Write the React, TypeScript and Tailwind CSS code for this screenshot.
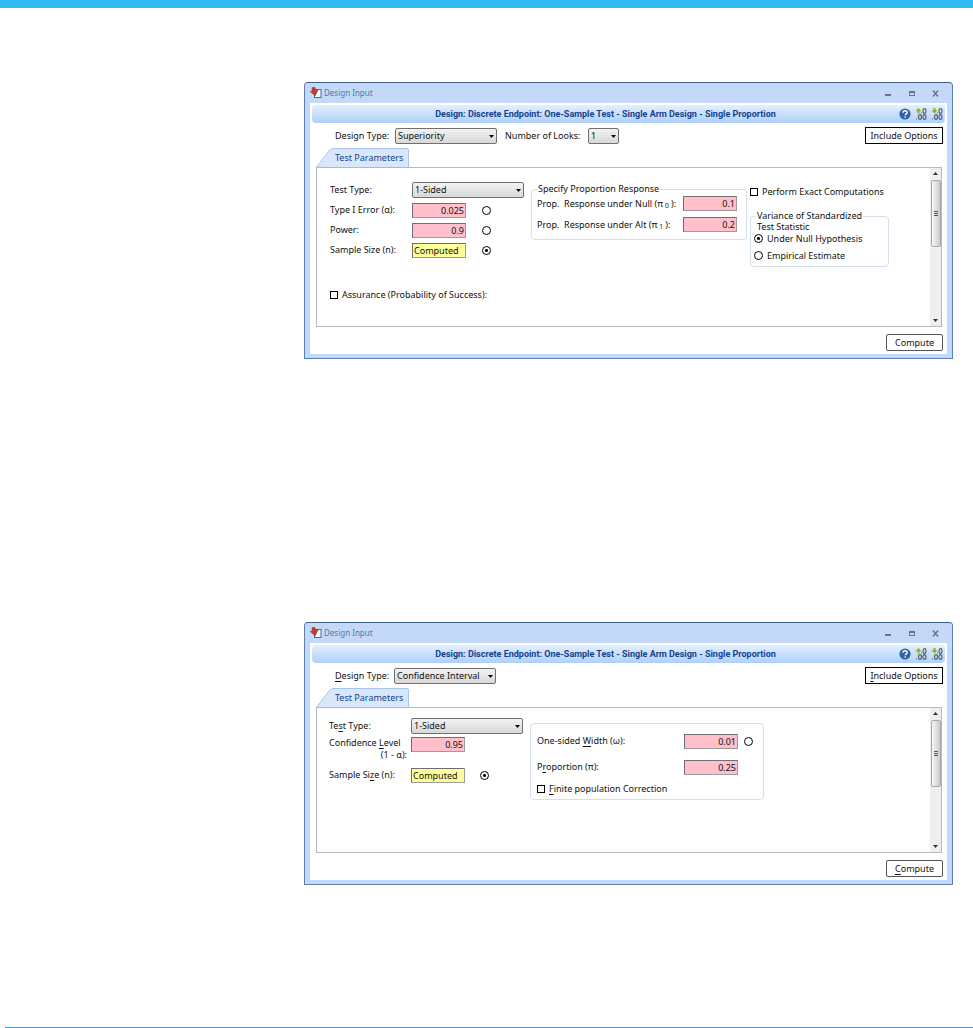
import type { ReactNode, InputHTMLAttributes } from "react";

const Access = ({ children }: { children: ReactNode }) => (
  <span className="underline underline-offset-2">{children}</span>
);

const AppIcon = () => (
  <svg className="h-[12px] w-[12px]" viewBox="0 0 12 12" aria-hidden="true">
    <rect x="4.5" y="2.5" width="6.500" height="8" fill="#fff" stroke="#3f68a8" />
    <path
      d="M2 .6 5 .4 5.400 3.200 8 3 5.200 8.800.2 4.600 2.200 4.200z"
      fill="#c8372a"
      stroke="#97291f"
      strokeWidth="0.5"
    />
  </svg>
);

const HelpIcon = () => (
  <svg className="h-[12px] w-[12px]" viewBox="0 0 12 12" aria-hidden="true">
    <circle cx="6" cy="6" r="5.6" fill="#2f63a4" />
    <path d="M3.9 4.8C3.9 3.4 4.8 2.7 6 2.7s2.2.7 2.2 1.8c0 1.3-1.9 1.4-1.9 2.8" fill="none" stroke="#fff" strokeWidth="1.4" />
    <circle cx="6.2" cy="9.1" r="0.8" fill="#fff" />
  </svg>
);

const DecimalIcon = ({ down }: { down?: boolean }) => (
  <svg className="h-[12px] w-[12px]" viewBox="0 0 12 12" aria-hidden="true">
    <path d={down ? "M2.500 0h2v2.200H6.500L3.500 5.500.5 2.200h2z" : "M3.500 0 6.500 3.200H4.500v2.200h-2V3.200H.5z"} fill="#8fae2b" />
    <g fill="none" stroke="#5c6670" strokeWidth="1.200">
      <ellipse cx="9.500" cy="3" rx="1.500" ry="2.300" />
      <ellipse cx="5" cy="9" rx="1.500" ry="2.300" />
      <ellipse cx="9.500" cy="9" rx="1.500" ry="2.300" />
    </g>
    <path d="M1 10.500h1v1H1zM6 4.500h1v1H6z" fill="#5c6670" />
  </svg>
);

type PickProps = { id: string; value: string; className?: string };

const Pick = ({ id, value, className = "" }: PickProps) => (
  <span className={`relative flex h-4 items-center ${className}`}>
    <select
      id={id}
      className="h-full w-full appearance-none rounded-xs border border-[#707070] bg-linear-to-b from-[#f3f3f3] to-[#d8d8d8] pl-[2px] leading-[14px]"
    >
      <option>{value}</option>
    </select>
    <svg className="pointer-events-none absolute right-[3px] h-[3px] w-[5px]" viewBox="0 0 5 3" aria-hidden="true">
      <path d="M0 0h5L2.500 3z" fill="#000" />
    </svg>
  </span>
);

const Field = ({ id, value, computed }: { id: string; value: string; computed?: boolean }) => (
  <input
    id={id}
    defaultValue={value}
    readOnly={computed}
    className={`h-[15px] w-[54px] border border-[#a09a9a] border-t-[#6e6e6e] border-l-[#6e6e6e] px-[1px] leading-none ${
      computed ? "bg-[#ffff99] text-left" : "bg-[#ffc0cb] text-right"
    }`}
  />
);

const Radio = (props: InputHTMLAttributes<HTMLInputElement>) => (
  <input
    type="radio"
    {...props}
    className="h-[9px] w-[9px] shrink-0 appearance-none rounded-full border border-black bg-white checked:bg-[radial-gradient(circle,#000_1px,#fff_2px)]"
  />
);

const Check = ({ id }: { id: string }) => (
  <input id={id} type="checkbox" className="h-2 w-2 shrink-0 appearance-none border border-black bg-white" />
);

const ScrollBar = () => (
  <div className="flex w-[11px] shrink-0 flex-col items-center bg-[#efefef] py-1" aria-hidden="true">
    <svg className="h-[3px] w-[5px]" viewBox="0 0 5 3"><path d="M2.500 0 5 3H0z" fill="#333" /></svg>
    <div className="mt-[5px] flex h-[67px] w-[10px] flex-col items-center justify-center gap-px rounded-xs border border-[#a8a8a8] bg-linear-to-r from-[#f6f6f6] to-[#c9cbd0]">
      <i className="h-px w-1 bg-[#555]" />
      <i className="h-px w-1 bg-[#555]" />
      <i className="h-px w-1 bg-[#555]" />
    </div>
    <svg className="mt-auto h-[3px] w-[5px]" viewBox="0 0 5 3"><path d="M0 0h5L2.500 3z" fill="#333" /></svg>
  </div>
);

type WindowProps = { toolbar: ReactNode; include: ReactNode; compute: ReactNode; children: ReactNode };

const DesignWindow = ({ toolbar, include, compute, children }: WindowProps) => (
  <section className="rounded-t-sm border border-[#5f7fae] border-t-[#3d5f86] bg-[#bfd9ff] px-[5px] pb-1">
    <header className="-mx-[5px] flex h-5 items-center rounded-t-sm bg-[#c3d9f7] pr-[13px] pl-[5px] text-[#4d7ab5]">
      <AppIcon />
      <h2 className="ml-[2px] text-[8px]">Design Input</h2>
      <div className="ml-auto flex items-center gap-[17px]">
        <button aria-label="Minimize" className="flex h-2 w-[7px] items-end pb-px"><i className="h-[2px] w-[6px] bg-[#65758c]" /></button>
        <button aria-label="Maximize" className="h-[5px] w-[6px] border border-t-2 border-[#65758c]" />
        <button aria-label="Close" className="h-[7px] w-[7px]">
          <svg className="h-[7px] w-[7px]" viewBox="0 0 7 7"><path d="M1 .5 6 6.500M6 .5 1 6.500" stroke="#65758c" strokeWidth="1.400" /></svg>
        </button>
      </div>
    </header>
    <div className="bg-white pt-[2px] pb-[3px]">
      <div className="mx-[2px] flex h-[18px] items-center rounded-sm bg-linear-to-b from-[#e3efff] to-[#afd0fc] pr-[2px] font-[Roboto,sans-serif] font-bold text-[#15428b]">
        <h3 className="flex-1 text-center">
          Design: Discrete Endpoint: One-Sample Test - Single Arm Design - Single Proportion
        </h3>
        <div className="flex gap-1">
          <button aria-label="Help"><HelpIcon /></button>
          <button aria-label="Increase decimals"><DecimalIcon /></button>
          <button aria-label="Decrease decimals"><DecimalIcon down /></button>
        </div>
      </div>
      <div className="mt-1 flex pr-[4px] pl-[25px]">
        <div className="flex h-[18px] items-center">{toolbar}</div>
        <button className="ml-auto h-[17px] w-[78px] border border-black">{include}</button>
      </div>
      <div className="mt-[3px] ml-[6px] flex" role="tablist">
        <button role="tab" aria-selected="true" className="relative h-[19px] w-[93px] pl-[19px] text-left text-[#15428b]">
          <svg className="absolute inset-0 h-full w-full" viewBox="0 0 93 19" preserveAspectRatio="none" aria-hidden="true">
            <path d="M0.500 19C5 14 11 5 14 2Q15.500.5 18 .5H91Q92.500.5 92.500 2V19" fill="#d9e7fb" stroke="#a9c4e8" />
          </svg>
          <span className="relative">Test Parameters</span>
        </button>
      </div>
      <div className="mr-[5px] ml-[6px] flex border border-[#b8b8b8]" role="tabpanel">
        {children}
        <ScrollBar />
      </div>
      <div className="mt-[7px] flex justify-end pr-[4px]">
        <button className="h-[17px] w-[57px] rounded-xs border border-[#555]">{compute}</button>
      </div>
    </div>
  </section>
);

const SuperiorityWindow = () => (
  <DesignWindow
    toolbar={
      <>
        <label htmlFor="type-1" className="w-[60px]">Design Type:</label>
        <Pick id="type-1" value="Superiority" className="w-[102px]" />
        <label htmlFor="looks" className="ml-2 w-[83px]">Number of Looks:</label>
        <Pick id="looks" value="1" className="w-[31px]" />
      </>
    }
    include="Include Options"
    compute="Compute"
  >
    <div className="flex h-[158px] flex-1 items-start pl-[13px]">
      <div className="w-[201px] pt-3">
        <div className="grid auto-rows-[20px] grid-cols-[82px_70px_1fr] items-center">
          <label htmlFor="test-1">Test Type:</label>
          <Pick id="test-1" value="1-Sided" className="col-span-2 w-[112px]" />
          <label htmlFor="alpha">Type I Error (α):</label>
          <Field id="alpha" value="0.025" />
          <Radio name="solve-1" aria-label="Compute type I error" />
          <label htmlFor="power">Power:</label>
          <Field id="power" value="0.9" />
          <Radio name="solve-1" aria-label="Compute power" />
          <label htmlFor="size-1">Sample Size (n):</label>
          <Field id="size-1" value="Computed" computed />
          <Radio name="solve-1" aria-label="Compute sample size" defaultChecked />
        </div>
        <div className="mt-[29px] flex items-center gap-1">
          <Check id="assurance" />
          <label htmlFor="assurance">Assurance (Probability of Success):</label>
        </div>
      </div>
      <fieldset className="mt-[15px] h-[57px] w-[216px] rounded-sm border border-[#d3dfea] px-[5px]">
        <legend className="px-px">Specify Proportion Response</legend>
        <div className="flex flex-col gap-[6px] pt-px pr-1">
          <div className="flex h-[15px] items-center justify-between">
            <label htmlFor="null">Prop.&nbsp; Response under Null (π<sub className="mx-[2px]">0</sub>):</label>
            <Field id="null" value="0.1" />
          </div>
          <div className="flex h-[15px] items-center justify-between">
            <label htmlFor="alt">Prop.&nbsp; Response under Alt (π<sub className="mx-[2px]">1</sub>):</label>
            <Field id="alt" value="0.2" />
          </div>
        </div>
      </fieldset>
      <div className="ml-[3px] w-[139px] pt-[18px]">
        <div className="flex items-center gap-1">
          <Check id="exact" />
          <label htmlFor="exact">Perform Exact Computations</label>
        </div>
        <fieldset className="mt-3 h-[57px] rounded-sm border border-[#d3dfea] px-[3px]" aria-describedby="variance-note">
          <legend className="ml-[2px] px-px">Variance of Standardized</legend>
          <p id="variance-note" className="-mt-px ml-[3px] h-[9px]">Test Statistic</p>
          <div className="flex h-[17px] items-center gap-1">
            <Radio id="under-null" name="variance" defaultChecked />
            <label htmlFor="under-null">Under Null Hypothesis</label>
          </div>
          <div className="flex h-[17px] items-center gap-1">
            <Radio id="empirical" name="variance" />
            <label htmlFor="empirical">Empirical Estimate</label>
          </div>
        </fieldset>
      </div>
    </div>
  </DesignWindow>
);

const ConfidenceWindow = () => (
  <DesignWindow
    toolbar={
      <>
        <label htmlFor="type-2" className="w-[59px]"><Access>D</Access>esign Type:</label>
        <Pick id="type-2" value="Confidence Interval" className="w-[102px]" />
      </>
    }
    include={<><Access>I</Access>nclude Options</>}
    compute={<><Access>C</Access>ompute</>}
  >
    <div className="flex h-[144px] flex-1 items-start pl-3">
      <div className="grid w-[201px] grid-cols-[82px_69px_1fr] items-center pt-[10px]">
        <label htmlFor="test-2">Te<Access>s</Access>t Type:</label>
        <Pick id="test-2" value="1-Sided" className="col-span-2 w-[112px]" />
        <label htmlFor="level" className="col-start-1 mt-[3px]">
          Confidence <Access>L</Access>evel
          <span className="block pr-1 text-right">(1 - α):</span>
        </label>
        <span className="flex h-5 self-start pt-[3px]"><Field id="level" value="0.95" /></span>
        <label htmlFor="size-2" className="col-start-1 mt-[5px]">Sample Si<Access>z</Access>e (n):</label>
        <span className="mt-[7px] flex"><Field id="size-2" value="Computed" computed /></span>
        <span className="mt-[7px] flex"><Radio name="solve-2" aria-label="Compute sample size" defaultChecked /></span>
      </div>
      <fieldset className="mt-[15px] w-[234px] rounded-sm border border-[#d3dfea] pt-[9px] pb-1 pl-[6px]">
        <div className="flex h-4 items-center">
          <label htmlFor="width" className="w-[147px]">One-sided <Access>W</Access>idth (ω):</label>
          <Field id="width" value="0.01" />
          <span className="ml-[6px] flex"><Radio name="solve-2" aria-label="Compute width" /></span>
        </div>
        <div className="mt-[10px] flex h-4 items-center">
          <label htmlFor="prop" className="w-[147px]">P<Access>r</Access>oportion (π):</label>
          <Field id="prop" value="0.25" />
        </div>
        <div className="mt-2 flex items-center gap-1">
          <Check id="finite" />
          <label htmlFor="finite"><Access>F</Access>inite population Correction</label>
        </div>
      </fieldset>
    </div>
  </DesignWindow>
);

export default function App() {
  return (
    <div className="flex min-h-screen flex-col bg-white font-['Noto_Sans',sans-serif] text-[9px] leading-3 text-[#111]">
      <div className="h-2 bg-[#33bcf4]" />
      <main className="flex flex-1 flex-col gap-[263px] pt-[74px] pr-5 pl-[304px] whitespace-nowrap">
        <SuperiorityWindow />
        <ConfidenceWindow />
      </main>
      <hr className="ml-[5px] border-t border-[#1ca5e0]" />
    </div>
  );
}
